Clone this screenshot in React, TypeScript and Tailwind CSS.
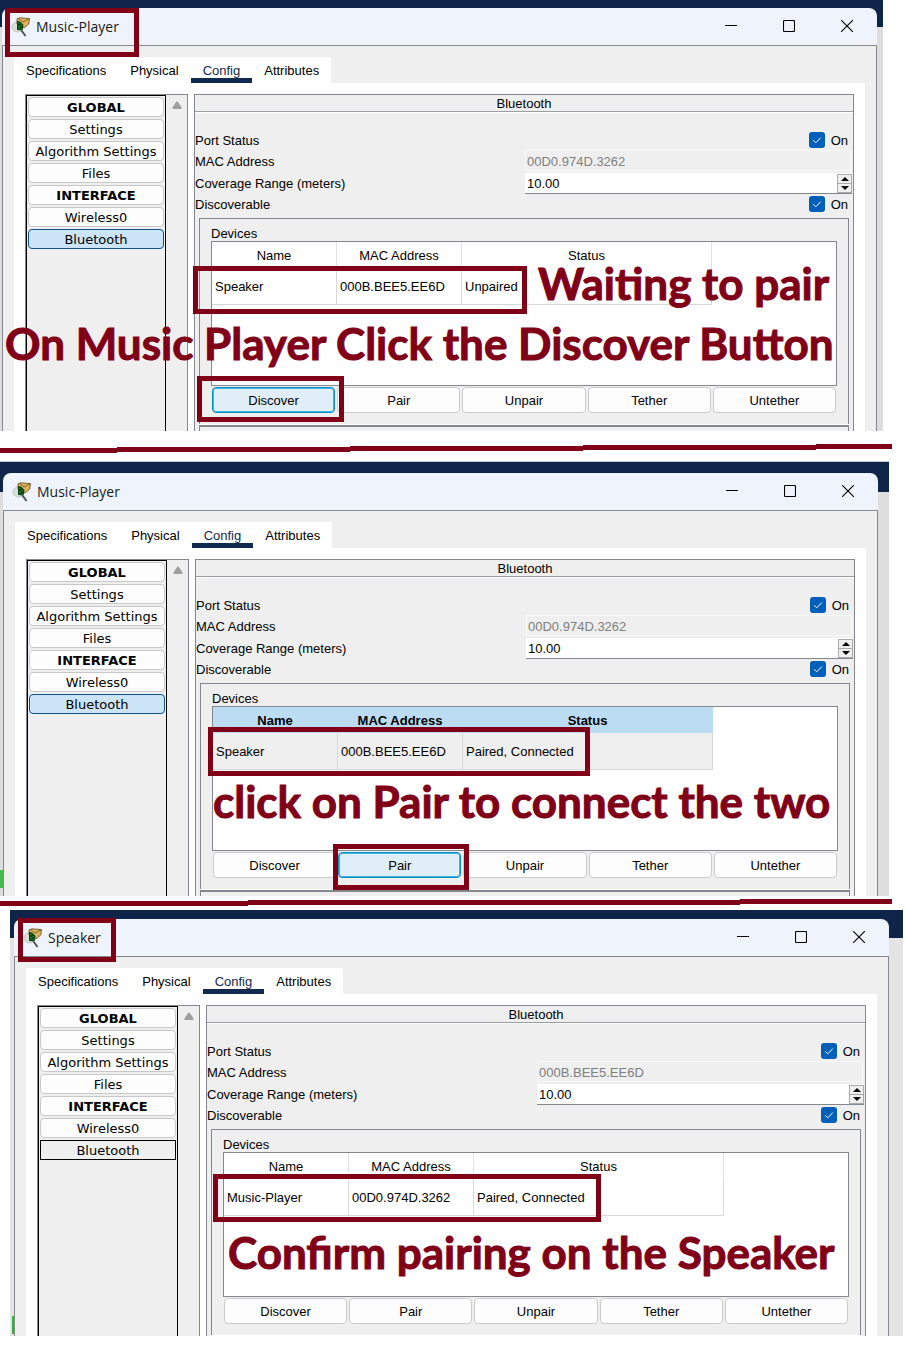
import React from "react";

type SelectedStyle = "filled" | "outlined";

interface Device {
  name: string;
  mac: string;
  status: string;
}

interface DeviceWindowProps {
  id: string;
  title: string;
  mac: string;
  device: Device;
  activeAction?: string;
  highlightRow?: boolean;
  selectedStyle?: SelectedStyle;
  continues?: boolean;
}

const tabs = ["Specifications", "Physical", "Config", "Attributes"];

const sidebar = [
  { label: "GLOBAL", heading: true },
  { label: "Settings" },
  { label: "Algorithm Settings" },
  { label: "Files" },
  { label: "INTERFACE", heading: true },
  { label: "Wireless0" },
  { label: "Bluetooth", selected: true },
];

const actions = ["Discover", "Pair", "Unpair", "Tether", "Untether"];

function AppIcon() {
  return (
    <svg viewBox="0 0 20 20" className="size-5" aria-hidden="true">
      <ellipse cx="7.5" cy="10" rx="5.5" ry="5" fill="#dcdedb" stroke="#b9bcb8" strokeWidth="0.8" />
      <path d="M7 1.8 L10 0.8 L19.5 1.6 L18.8 7 L14 11 L7 7z" fill="#dfb25c" stroke="#4b3a18" strokeWidth="0.7" />
      <path d="M8.5 1.6 L13 5 L19.2 1.8" fill="none" stroke="#6b5222" strokeWidth="0.8" />
      <path d="M7 4 L10 4.5 L13.5 8 L12.5 13.5 L7 13z" fill="#0b4310" />
      <path d="M8 6 l1.5 .5 M10.5 8.5 l1.5 .5 M8 9.5 l2 .5 M10.5 11.5 l1 .3 M8 11.8 l1.2 .2" stroke="#2c9a33" strokeWidth="1" />
      <path d="M11.5 13.5 L15.5 19" stroke="#4a4d50" strokeWidth="1.8" />
    </svg>
  );
}

function OnToggle({ id, label }: { id: string; label: string }) {
  return (
    <label htmlFor={id} className="flex items-center justify-end gap-1.5 pr-[5px]">
      <span className="grid size-4 place-items-center">
        <input
          id={id}
          type="checkbox"
          defaultChecked
          aria-label={label}
          className="col-start-1 row-start-1 size-4 appearance-none rounded-[3px] bg-[#005fb8]"
        />
        <svg viewBox="0 0 16 16" className="pointer-events-none col-start-1 row-start-1 size-4" aria-hidden="true">
          <path d="M4.2 8.3 L6.8 10.8 L11.8 5.6" fill="none" stroke="#fff" strokeWidth="1" />
        </svg>
      </span>
      <span className="pt-0.5">On</span>
    </label>
  );
}

function TitleBar({ title }: { title: string }) {
  return (
    <header className="flex h-[37px] items-center justify-between rounded-t-lg bg-[#eff3fb] pr-6 pl-2">
      <h2 className="flex items-center gap-1.5 font-['Open_Sans','Noto_Sans',sans-serif] text-sm text-[#1a1a1a]">
        <AppIcon />
        {title}
      </h2>
      <div className="flex items-center gap-[46px] pb-0.5 text-black">
        <button type="button" aria-label="Minimize" className="block">
          <svg viewBox="0 0 12 12" className="size-3"><path d="M0 5.5H12" stroke="currentColor" /></svg>
        </button>
        <button type="button" aria-label="Maximize" className="block">
          <svg viewBox="0 0 12 12" className="size-3">
            <rect x="0.5" y="0.5" width="11" height="11" rx="1" fill="none" stroke="currentColor" strokeWidth="1.1" />
          </svg>
        </button>
        <button type="button" aria-label="Close" className="block">
          <svg viewBox="0 0 12 12" className="size-3"><path d="M0 0L12 12M12 0L0 12" stroke="currentColor" strokeWidth="1.1" /></svg>
        </button>
      </div>
    </header>
  );
}

function Sidebar({ selectedStyle }: { selectedStyle: SelectedStyle }) {
  const selectedClass =
    selectedStyle === "filled"
      ? "rounded-[4px] border-[#10518f] bg-[#cce4f7]"
      : "border-black bg-[#efefef]";
  return (
    <nav className="flex w-[163px] shrink-0 border border-b-0 border-[#84888e] bg-[#efefef]">
      <ul className="flex w-[140px] flex-col gap-0.5 border border-b-0 border-black p-px font-['DejaVu_Sans',sans-serif] text-[13px]">
        {sidebar.map((item) => (
          <li key={item.label}>
            <button
              type="button"
              className={`flex h-5 w-full items-center justify-center border pt-0.5 whitespace-nowrap ${
                item.heading ? "font-bold" : ""
              } ${item.selected ? selectedClass : "rounded-[4px] border-[#c8c8c8] bg-[#fdfdfd]"}`}
            >
              {item.label}
            </button>
          </li>
        ))}
      </ul>
      <div className="flex flex-1 justify-center pt-1.5">
        <svg viewBox="0 0 10 8" className="h-2 w-2.5" aria-hidden="true">
          <path d="M4.2 0.8 Q5 0 5.8 0.8 L9.6 6.6 Q9.8 7.8 8.8 8 H1.2 Q0.2 7.8 0.4 6.6z" fill="#a0a0a0" />
        </svg>
      </div>
    </nav>
  );
}

function DeviceTable({ device, highlightRow }: { device: Device; highlightRow: boolean }) {
  return (
    <div className="min-h-[145px] border border-[#84888e] bg-white">
      <table className="w-[500px] table-fixed border-separate border-spacing-0">
        <colgroup>
          <col className="w-[125px]" />
          <col className="w-[125px]" />
          <col className="w-[250px]" />
        </colgroup>
        <thead>
          <tr className={highlightRow ? "bg-[#bbdcf2]" : "bg-white"}>
            {["Name", "MAC Address", "Status"].map((heading) => (
              <th
                key={heading}
                scope="col"
                className={`h-[26px] border-r px-0 pt-0.5 pb-0 text-center ${
                  highlightRow ? "border-[#bbdcf2] font-bold" : "border-[#e3e3e3] font-normal"
                }`}
              >
                {heading}
              </th>
            ))}
          </tr>
        </thead>
        <tbody>
          <tr className={highlightRow ? "bg-[#efefef]" : "bg-white"}>
            {[device.name, device.mac, device.status].map((value) => (
              <td key={value} className="h-[37px] border-r border-b border-[#d8d8d8] pt-0.5 pr-0 pb-0 pl-[3px]">
                {value}
              </td>
            ))}
          </tr>
        </tbody>
      </table>
    </div>
  );
}

function DeviceWindow({
  id,
  title,
  mac,
  device,
  activeAction,
  highlightRow = false,
  selectedStyle = "filled",
  continues = false,
}: DeviceWindowProps) {
  return (
    <section className="font-['Liberation_Sans',Arial,sans-serif] text-[13px] leading-4 text-black">
      <TitleBar title={title} />
      <div className="border border-b-0 border-[#84888e] bg-[#efefef] pt-[11px] pr-[11px] pl-[11px]">
        <div className="flex w-fit bg-white" role="tablist">
          {tabs.map((tab) => (
            <button
              key={tab}
              type="button"
              role="tab"
              aria-selected={tab === "Config"}
              className={`h-[26px] border-b-[5px] px-3 pt-1.5 ${
                tab === "Config" ? "border-[#102a50] text-[#102a50]" : "border-white"
              }`}
            >
              {tab}
            </button>
          ))}
        </div>
        <div className="flex gap-1.5 bg-white pt-[11px] pr-[11px] pl-[11px]">
          <Sidebar selectedStyle={selectedStyle} />
          <div className="min-w-0 flex-1 border border-b-0 border-[#84888e] bg-[#efefef]">
            <h3 className="h-[17px] border-b border-[#9a9da2] pt-px text-center">Bluetooth</h3>
            <div className="border-t border-white pt-[18px]">
              <div className="grid h-[18px] grid-cols-2 items-center">
                <span className="pt-0.5">Port Status</span>
                <OnToggle id={`${id}-port`} label="Port Status" />
              </div>
              <div className="grid h-[23px] grid-cols-2 items-center">
                <label htmlFor={`${id}-mac`} className="pt-0.5">MAC Address</label>
                <input
                  id={`${id}-mac`}
                  type="text"
                  disabled
                  defaultValue={mac}
                  className="mr-0.5 ml-px h-[21px] min-w-0 border border-[#f8f8f8] bg-[#efefef] px-px pt-0.5 text-[#808080]"
                />
              </div>
              <div className="grid h-[22px] grid-cols-2 items-center">
                <label htmlFor={`${id}-range`} className="pt-0.5">Coverage Range (meters)</label>
                <div className="mr-px ml-px flex h-[21px] border-b border-[#84888e] bg-white">
                  <input
                    id={`${id}-range`}
                    type="text"
                    defaultValue="10.00"
                    className="min-w-0 flex-1 bg-white px-0.5 pt-0.5"
                  />
                  <div className="mt-px flex h-[19px] w-[15px] flex-col border border-[#aaaaaa] bg-[#efefef]">
                    <button
                      type="button"
                      aria-label="Increase range"
                      className="flex flex-1 items-center justify-center border-b border-[#aaaaaa]"
                    >
                      <svg viewBox="0 0 8 4" className="h-1 w-2"><path d="M4 0L8 4H0z" /></svg>
                    </button>
                    <button type="button" aria-label="Decrease range" className="flex flex-1 items-center justify-center">
                      <svg viewBox="0 0 8 4" className="h-1 w-2"><path d="M4 4L8 0H0z" /></svg>
                    </button>
                  </div>
                </div>
              </div>
              <div className="grid h-5 grid-cols-2 items-center">
                <span className="pt-0.5">Discoverable</span>
                <OnToggle id={`${id}-discoverable`} label="Discoverable" />
              </div>
              <div className="mx-1 mt-1 border border-b-0 border-[#84888e] px-[11px] pt-[7px] pb-[11px]">
                <h4 className="h-[15px]">Devices</h4>
                <DeviceTable device={device} highlightRow={highlightRow} />
                <div className="mx-px mt-px grid grid-cols-5 gap-0.5">
                  {actions.map((action) => (
                    <button
                      key={action}
                      type="button"
                      className={`h-[26px] rounded-[4px] border pt-0.5 ${
                        action === activeAction
                          ? "border-[#0091c8] bg-[#e0eef9] ring-1 ring-[#48b4dc] ring-inset"
                          : "border-[#cbcbcb] bg-[#fdfdfd]"
                      }`}
                    >
                      {action}
                    </button>
                  ))}
                </div>
              </div>
              <div className="mx-1 border-t border-white">
                {continues && <div className="h-1.5 border border-t-2 border-b-0 border-[#84888e]" />}
              </div>
            </div>
          </div>
        </div>
      </div>
    </section>
  );
}

function Marker({ className }: { className: string }) {
  return <div className={`pointer-events-none absolute border-5 border-[#800018] ${className}`} />;
}

function Note({ className, children }: { className: string; children: React.ReactNode }) {
  return (
    <p
      className={`pointer-events-none absolute font-['Lato','Open_Sans',sans-serif] text-[44px] leading-10 font-bold whitespace-nowrap text-[#800018] [-webkit-text-stroke:1px_#800018] ${className}`}
    >
      {children}
    </p>
  );
}

function Divider({ d }: { d: string }) {
  return (
    <svg viewBox="0 0 892 14" className="block h-3.5 w-[892px]" aria-hidden="true">
      <path d={d} fill="none" stroke="#800018" strokeWidth="5" />
    </svg>
  );
}

export default function App() {
  return (
    <main className="bg-white pb-2.5">
      <div className="relative mr-[23px] bg-[linear-gradient(#0e2448_27px,#dedede_27px)] pt-2 pr-1.5 pl-0.5">
        <DeviceWindow
          id="player-discover"
          title="Music-Player"
          mac="00D0.974D.3262"
          device={{ name: "Speaker", mac: "000B.BEE5.EE6D", status: "Unpaired" }}
          activeAction="Discover"
          continues
        />
        <Marker className="top-2 left-[5px] h-[49px] w-[134px]" />
        <Marker className="top-[266px] left-[193px] h-12 w-[334px]" />
        <Marker className="top-[376px] left-[197px] h-[46px] w-[147px]" />
        <Note className="top-[263px] left-[538px]">Waiting to pair</Note>
        <Note className="top-[323px] left-[5px]">On Music Player Click the Discover Button</Note>
      </div>

      <div className="pt-[11px] pb-[5px]">
        <Divider d="M0 8.5H117M117 7.5H350M350 6.5H583M583 5.5H816M816 4.5H892" />
      </div>

      <div className="relative mr-[17px] border-t border-[#c4c7cc] bg-[linear-gradient(#0e2448_30px,#dedede_30px)] pt-[11px] pr-[11px] pl-[3px]">
        <DeviceWindow
          id="player-pair"
          title="Music-Player"
          mac="00D0.974D.3262"
          device={{ name: "Speaker", mac: "000B.BEE5.EE6D", status: "Paired, Connected" }}
          activeAction="Pair"
          highlightRow
          continues
        />
        <div className="absolute top-[408px] left-0 h-[18px] w-[3px] bg-[#44bb4c]" />
        <Marker className="top-[265px] left-[208px] h-[49px] w-[382px]" />
        <Marker className="top-[382px] left-[333px] h-[46px] w-[136px]" />
        <Note className="top-[319px] left-[213px]">click on Pair to connect the two</Note>
      </div>

      <Divider d="M0 7.5H248M248 6.5H740M740 5.5H892" />

      <div className="relative mr-[3px] ml-2.5 bg-[linear-gradient(#0e2448_28px,#e4e4e4_28px)] pt-[9px] pr-3.5 pl-1">
        <DeviceWindow
          id="speaker"
          title="Speaker"
          mac="000B.BEE5.EE6D"
          device={{ name: "Music-Player", mac: "00D0.974D.3262", status: "Paired, Connected" }}
          selectedStyle="outlined"
        />
        <div className="absolute top-[406px] left-0.5 h-[18px] w-0.5 bg-[#2fb43a]" />
        <Marker className="top-2 left-2 h-11 w-[98px]" />
        <Marker className="top-[264px] left-[203px] h-12 w-[388px]" />
        <Note className="top-[322px] left-[218px]">Confirm pairing on the Speaker</Note>
      </div>
    </main>
  );
}
